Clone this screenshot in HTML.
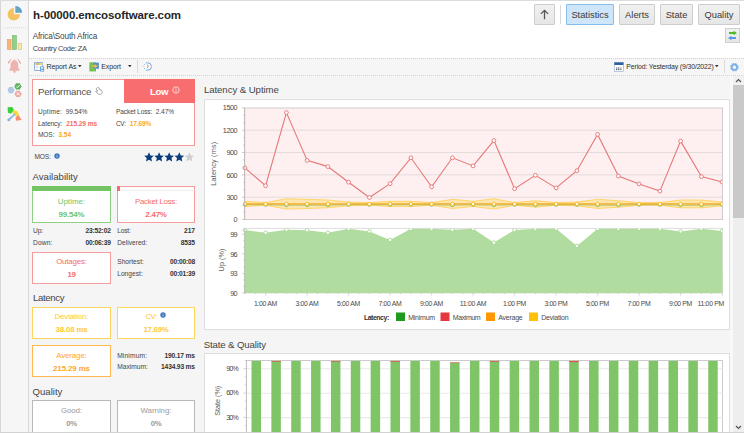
<!DOCTYPE html>
<html lang="en"><head><meta charset="utf-8"><title>h-00000.emcosoftware.com - Statistics</title>
<style>

*{box-sizing:border-box;margin:0;padding:0}
html,body{width:744px;height:433px;overflow:hidden}
body{position:relative;background:#f5f5f5;font-family:"Liberation Sans",sans-serif;font-size:8px;color:#444}
.a{position:absolute}
.t{position:absolute;white-space:pre;line-height:1}
.side{left:0;top:0;width:29px;height:433px;background:#f6f6f6;border-left:1px solid #d6d6d6;border-right:1px solid #d8d8d8}
.head{left:29px;top:0;width:715px;height:58px;background:#fff}
.topline{left:0;top:0;width:744px;height:1px;background:#dcdcdc}
.tool{left:29px;top:58px;width:715px;height:18px;background:#f6f6f6;border-top:1px dotted #d2d2d2;border-bottom:1px dotted #d2d2d2}
.btn{top:4px;height:21px;border:1px solid #cdcdcd;background:linear-gradient(#f1f1f1,#e6e6e6);border-radius:1px}
.btn.on{background:#cfe5f9;border-color:#84bdee}
.tile{background:#fff;border:1px solid #999}
.panel{background:#fff;border:1px solid #dedede}
svg{position:absolute;overflow:visible}
svg text{font-family:"Liberation Sans",sans-serif}

</style></head>
<body>
<div class="a side"></div><div class="a head"></div><div class="a tool"></div><div class="a topline"></div><div class="a btn" style="left:534px;width:21px"></div><svg class="a" style="left:534px;top:4px" width="21" height="21" viewBox="0 0 21 21"><path d="M10.5 6.3v8.9M6.9 9.9l3.6-3.6 3.6 3.6" fill="none" stroke="#555" stroke-width="1.3"/></svg><div class="a" style="left:560px;top:5px;width:1px;height:19px;background:#d8d8d8"></div><div class="a btn on" style="left:566px;width:48px"></div><div class="a btn" style="left:619px;width:36px"></div><div class="a btn" style="left:660px;width:33px"></div><div class="a btn" style="left:698px;width:42px"></div><div class="a" style="left:725px;top:28px;width:15px;height:15px;border:1px solid #d0d0d0;background:linear-gradient(#f1f1f1,#e6e6e6)"></div><svg class="a" style="left:725px;top:28px" width="15" height="15" viewBox="0 0 15 15"><path d="M4 4h4.6V2.7L12 5 8.600 7.300V6H4z" fill="#4cbb2a"/><path d="M11 9H6.400V7.800L3 10l3.400 2.200V11H11z" fill="#5a9be0"/></svg><svg class="a" style="left:78.0px;top:65.2px" width="3.6" height="2.4" viewBox="0 0 3.6 2.4"><path d="M0 0h3.6L1.8 2.2z" fill="#333"/></svg><svg class="a" style="left:128.39999999999998px;top:65.2px" width="3.6" height="2.4" viewBox="0 0 3.6 2.4"><path d="M0 0h3.6L1.8 2.2z" fill="#333"/></svg><svg class="a" style="left:715.4000000000001px;top:65.2px" width="3.6" height="2.4" viewBox="0 0 3.6 2.4"><path d="M0 0h3.6L1.8 2.2z" fill="#333"/></svg><div class="a" style="left:137px;top:60px;width:1px;height:13px;background:#dadada"></div><div class="a" style="left:724px;top:60px;width:1px;height:13px;background:#dadada"></div><div class="a" style="left:32px;top:79px;width:163px;height:67px;background:#fff;border:1px solid #f59a9a"></div><div class="a" style="left:124px;top:79px;width:71px;height:24px;background:#f86d6d"></div><svg class="a" style="left:172px;top:86px" width="8" height="8" viewBox="0 0 8 8"><circle cx="4" cy="4" r="3.2" fill="none" stroke="#fff" stroke-width="0.7"/><path d="M4 3.6v2.2M4 2.2v0.6" stroke="#fff" stroke-width="0.8"/></svg><svg class="a" style="left:0;top:0" width="744" height="433" viewBox="0 0 744 433"><g transform="translate(97.8 87.5) scale(0.8) translate(-98.3 -87.2)"><path d="M98.3 87.2c.6-.3 1.100 0 1.400.6l.9 1.800c.5-.2 1 .1 1.200.5.500-.1.900.2 1.100.6l.8 1.700c.5 1.100.1 2.200-1 2.800l-1.100.5c-1 .4-1.900.2-2.700-.5l-2.700-2.300c-.5-.4-.4-1 .1-1.300.4-.2.900-.1 1.300.2l.5.400-1.400-2.900c-.3-.6-.1-1.200.5-1.500z" fill="#fff" stroke="#7c7c7c" stroke-width="0.85" stroke-linejoin="round"/><path d="M99.9 89.500l.6 1.200M101.200 90l.5 1.100" stroke="#999" stroke-width="0.6" fill="none"/></g></svg><svg class="a" style="left:54px;top:152.8px" width="6" height="6" viewBox="0 0 6 6"><circle cx="3" cy="3" r="2.7" fill="#3f78bf"/><path d="M3 2.7v1.6M3 1.6v.5" stroke="#fff" stroke-width="0.7"/></svg><svg class="a" style="left:143.5px;top:152px" width="52" height="10" viewBox="0 0 52 10"><path transform="translate(0.0,0)" d="M5 0.3l1.45 3.1 3.35.4-2.5 2.3.65 3.35L5 7.8 2.05 9.45 2.7 6.1.2 3.8l3.35-.4z" fill="#0a3d7a"/><path transform="translate(10.1,0)" d="M5 0.3l1.45 3.1 3.35.4-2.5 2.3.65 3.35L5 7.8 2.05 9.45 2.7 6.1.2 3.8l3.35-.4z" fill="#0a3d7a"/><path transform="translate(20.2,0)" d="M5 0.3l1.45 3.1 3.35.4-2.5 2.3.65 3.35L5 7.8 2.05 9.45 2.7 6.1.2 3.8l3.35-.4z" fill="#0a3d7a"/><path transform="translate(30.299999999999997,0)" d="M5 0.3l1.45 3.1 3.35.4-2.5 2.3.65 3.35L5 7.8 2.05 9.45 2.7 6.1.2 3.8l3.35-.4z" fill="#0a3d7a"/><path transform="translate(40.4,0)" d="M5 0.3l1.45 3.1 3.35.4-2.5 2.3.65 3.35L5 7.8 2.05 9.45 2.7 6.1.2 3.8l3.35-.4z" fill="#d0d0d0"/></svg><div class="a" style="left:32px;top:186px;width:79px;height:37px;background:#fff;border:1px solid #8fd083"></div><div class="a" style="left:32px;top:186px;width:79px;height:4.5px;background:#74c365"></div><div class="a" style="left:117px;top:186px;width:78px;height:37px;background:#fff;border:1px solid #f79c9c"></div><div class="a" style="left:117px;top:186px;width:78px;height:4.5px;border:1px solid #f79c9c;border-bottom:1px dotted #e2e2e2;background:#fbfbfb"></div><div class="a" style="left:117px;top:186px;width:3px;height:4.5px;background:#f56c6c"></div><div class="a" style="left:32px;top:252px;width:79px;height:32px;background:#fff;border:1px solid #f79c9c"></div><div class="a" style="left:32px;top:307px;width:79px;height:32px;background:#fff;border:1px solid #ffd55e"></div><div class="a" style="left:117px;top:307px;width:78px;height:32px;background:#fff;border:1px solid #ffd55e"></div><svg class="a" style="left:159.9px;top:311.6px" width="6" height="6" viewBox="0 0 6 6"><circle cx="3" cy="3" r="2.7" fill="#3f78bf"/><path d="M3 2.7v1.6M3 1.6v.5" stroke="#fff" stroke-width="0.7"/></svg><div class="a" style="left:32px;top:345px;width:79px;height:32px;background:#fff;border:1px solid #ffb854"></div><div class="a" style="left:32px;top:400px;width:79px;height:33px;background:#fff;border:1px solid #b8b8b8"></div><div class="a" style="left:117px;top:400px;width:78px;height:33px;background:#fff;border:1px solid #b8b8b8"></div><div class="a panel" style="left:204px;top:99px;width:526px;height:231px"></div><div class="a panel" style="left:204px;top:353px;width:526px;height:90px"></div><div class="a" style="left:730px;top:76px;width:3px;height:357px;background:#f8f8f8"></div><div class="a" style="left:733px;top:76px;width:11px;height:357px;background:#eeeeee"></div><div class="a" style="left:733px;top:85px;width:11px;height:133px;background:#c9c9c9"></div><div class="a" style="left:733px;top:76px;width:11px;height:9px;background:#f0f0f0"></div><svg class="a" style="left:733px;top:76px" width="11" height="9" viewBox="0 0 11 9"><path d="M3 6l2.5-2.5L8 6" fill="none" stroke="#555" stroke-width="1.2"/></svg><svg class="a" style="left:733px;top:422px" width="11" height="11" viewBox="0 0 11 11"><path d="M3 4l2.5 2.5L8 4" fill="none" stroke="#555" stroke-width="1.2"/></svg><div class="a" style="left:0;top:432px;width:744px;height:1px;background:#d2d2d2;z-index:5"></div><svg class="a" style="left:0;top:0" width="744" height="433" viewBox="0 0 744 433"><rect x="244.5" y="108" width="478.0" height="111.5" fill="#fef0f0"/>
<line x1="244.5" x2="722.5" y1="197.17" y2="197.17" stroke="#ddd5d5" stroke-width="0.8"/>
<line x1="244.5" x2="722.5" y1="174.84" y2="174.84" stroke="#ddd5d5" stroke-width="0.8"/>
<line x1="244.5" x2="722.5" y1="152.51" y2="152.51" stroke="#ddd5d5" stroke-width="0.8"/>
<line x1="244.5" x2="722.5" y1="130.18" y2="130.18" stroke="#ddd5d5" stroke-width="0.8"/>
<rect x="244.5" y="108" width="478.0" height="111.5" fill="none" stroke="#d2cccc" stroke-width="1"/>
<clipPath id="latclip"><rect x="241.9" y="108" width="480.3" height="111.5"/></clipPath><g clip-path="url(#latclip)">
<polygon points="244.9,201.3 265.6,202.6 286.4,198.7 307.1,199.3 327.9,200.0 348.6,202.0 369.4,202.6 390.1,201.3 410.9,201.3 431.6,202.6 452.4,199.3 473.1,201.3 493.9,198.7 514.6,202.6 535.4,200.7 556.1,202.6 576.9,202.0 597.6,199.3 618.4,200.7 639.1,202.6 659.9,202.6 680.6,200.0 701.4,200.0 722.1,202.0 722.1,205.8 701.4,207.8 680.6,207.8 659.9,205.2 639.1,205.2 618.4,207.2 597.6,208.5 576.9,205.8 556.1,205.2 535.4,207.2 514.6,205.2 493.9,209.1 473.1,206.5 452.4,208.5 431.6,205.2 410.9,206.5 390.1,206.5 369.4,205.2 348.6,205.8 327.9,207.8 307.1,208.5 286.4,209.1 265.6,205.2 244.9,206.5" fill="#ffd95a" fill-opacity="0.42" stroke="#ffcd3c" stroke-width="0.7"/>
<polyline points="244.9,204.7 265.6,204.7 286.4,205.1 307.1,205.1 327.9,205.1 348.6,204.7 369.4,204.7 390.1,204.7 410.9,204.7 431.6,204.7 452.4,205.1 473.1,204.7 493.9,205.1 514.6,204.7 535.4,205.1 556.1,204.7 576.9,204.7 597.6,205.1 618.4,205.1 639.1,204.7 659.9,204.7 680.6,205.1 701.4,205.1 722.1,204.7" fill="none" stroke="#7cb342" stroke-width="0.7"/>
<polyline points="244.9,203.9 265.6,203.9 286.4,203.9 307.1,203.9 327.9,203.9 348.6,203.9 369.4,203.9 390.1,203.9 410.9,203.9 431.6,203.9 452.4,203.9 473.1,203.9 493.9,203.9 514.6,203.9 535.4,203.9 556.1,203.9 576.9,203.9 597.6,203.9 618.4,203.9 639.1,203.9 659.9,203.9 680.6,203.9 701.4,203.9 722.1,203.9" fill="none" stroke="#f9a825" stroke-width="1.1"/>
<circle cx="244.9" cy="204.7" r="1.7" fill="#fff" stroke="#7cb342" stroke-width="0.8"/>
<circle cx="244.9" cy="203.9" r="1.7" fill="#fff" stroke="#ffb300" stroke-width="0.8"/>
<circle cx="265.6" cy="204.7" r="1.7" fill="#fff" stroke="#7cb342" stroke-width="0.8"/>
<circle cx="265.6" cy="203.9" r="1.7" fill="#fff" stroke="#ffb300" stroke-width="0.8"/>
<circle cx="286.4" cy="205.1" r="1.7" fill="#fff" stroke="#7cb342" stroke-width="0.8"/>
<circle cx="286.4" cy="203.9" r="1.7" fill="#fff" stroke="#ffb300" stroke-width="0.8"/>
<circle cx="307.1" cy="205.1" r="1.7" fill="#fff" stroke="#7cb342" stroke-width="0.8"/>
<circle cx="307.1" cy="203.9" r="1.7" fill="#fff" stroke="#ffb300" stroke-width="0.8"/>
<circle cx="327.9" cy="205.1" r="1.7" fill="#fff" stroke="#7cb342" stroke-width="0.8"/>
<circle cx="327.9" cy="203.9" r="1.7" fill="#fff" stroke="#ffb300" stroke-width="0.8"/>
<circle cx="348.6" cy="204.7" r="1.7" fill="#fff" stroke="#7cb342" stroke-width="0.8"/>
<circle cx="348.6" cy="203.9" r="1.7" fill="#fff" stroke="#ffb300" stroke-width="0.8"/>
<circle cx="369.4" cy="204.7" r="1.7" fill="#fff" stroke="#7cb342" stroke-width="0.8"/>
<circle cx="369.4" cy="203.9" r="1.7" fill="#fff" stroke="#ffb300" stroke-width="0.8"/>
<circle cx="390.1" cy="204.7" r="1.7" fill="#fff" stroke="#7cb342" stroke-width="0.8"/>
<circle cx="390.1" cy="203.9" r="1.7" fill="#fff" stroke="#ffb300" stroke-width="0.8"/>
<circle cx="410.9" cy="204.7" r="1.7" fill="#fff" stroke="#7cb342" stroke-width="0.8"/>
<circle cx="410.9" cy="203.9" r="1.7" fill="#fff" stroke="#ffb300" stroke-width="0.8"/>
<circle cx="431.6" cy="204.7" r="1.7" fill="#fff" stroke="#7cb342" stroke-width="0.8"/>
<circle cx="431.6" cy="203.9" r="1.7" fill="#fff" stroke="#ffb300" stroke-width="0.8"/>
<circle cx="452.4" cy="205.1" r="1.7" fill="#fff" stroke="#7cb342" stroke-width="0.8"/>
<circle cx="452.4" cy="203.9" r="1.7" fill="#fff" stroke="#ffb300" stroke-width="0.8"/>
<circle cx="473.1" cy="204.7" r="1.7" fill="#fff" stroke="#7cb342" stroke-width="0.8"/>
<circle cx="473.1" cy="203.9" r="1.7" fill="#fff" stroke="#ffb300" stroke-width="0.8"/>
<circle cx="493.9" cy="205.1" r="1.7" fill="#fff" stroke="#7cb342" stroke-width="0.8"/>
<circle cx="493.9" cy="203.9" r="1.7" fill="#fff" stroke="#ffb300" stroke-width="0.8"/>
<circle cx="514.6" cy="204.7" r="1.7" fill="#fff" stroke="#7cb342" stroke-width="0.8"/>
<circle cx="514.6" cy="203.9" r="1.7" fill="#fff" stroke="#ffb300" stroke-width="0.8"/>
<circle cx="535.4" cy="205.1" r="1.7" fill="#fff" stroke="#7cb342" stroke-width="0.8"/>
<circle cx="535.4" cy="203.9" r="1.7" fill="#fff" stroke="#ffb300" stroke-width="0.8"/>
<circle cx="556.1" cy="204.7" r="1.7" fill="#fff" stroke="#7cb342" stroke-width="0.8"/>
<circle cx="556.1" cy="203.9" r="1.7" fill="#fff" stroke="#ffb300" stroke-width="0.8"/>
<circle cx="576.9" cy="204.7" r="1.7" fill="#fff" stroke="#7cb342" stroke-width="0.8"/>
<circle cx="576.9" cy="203.9" r="1.7" fill="#fff" stroke="#ffb300" stroke-width="0.8"/>
<circle cx="597.6" cy="205.1" r="1.7" fill="#fff" stroke="#7cb342" stroke-width="0.8"/>
<circle cx="597.6" cy="203.9" r="1.7" fill="#fff" stroke="#ffb300" stroke-width="0.8"/>
<circle cx="618.4" cy="205.1" r="1.7" fill="#fff" stroke="#7cb342" stroke-width="0.8"/>
<circle cx="618.4" cy="203.9" r="1.7" fill="#fff" stroke="#ffb300" stroke-width="0.8"/>
<circle cx="639.1" cy="204.7" r="1.7" fill="#fff" stroke="#7cb342" stroke-width="0.8"/>
<circle cx="639.1" cy="203.9" r="1.7" fill="#fff" stroke="#ffb300" stroke-width="0.8"/>
<circle cx="659.9" cy="204.7" r="1.7" fill="#fff" stroke="#7cb342" stroke-width="0.8"/>
<circle cx="659.9" cy="203.9" r="1.7" fill="#fff" stroke="#ffb300" stroke-width="0.8"/>
<circle cx="680.6" cy="205.1" r="1.7" fill="#fff" stroke="#7cb342" stroke-width="0.8"/>
<circle cx="680.6" cy="203.9" r="1.7" fill="#fff" stroke="#ffb300" stroke-width="0.8"/>
<circle cx="701.4" cy="205.1" r="1.7" fill="#fff" stroke="#7cb342" stroke-width="0.8"/>
<circle cx="701.4" cy="203.9" r="1.7" fill="#fff" stroke="#ffb300" stroke-width="0.8"/>
<circle cx="722.1" cy="204.7" r="1.7" fill="#fff" stroke="#7cb342" stroke-width="0.8"/>
<circle cx="722.1" cy="203.9" r="1.7" fill="#fff" stroke="#ffb300" stroke-width="0.8"/>
<polyline points="244.9,167.9 265.6,185.7 286.4,112.6 307.1,160.4 327.9,166.6 348.6,182.2 369.4,197.5 390.1,183.7 410.9,157.8 431.6,186.8 452.4,157.8 473.1,165.9 493.9,140.6 514.6,188.7 535.4,175.3 556.1,187.9 576.9,170.7 597.6,134.4 618.4,176.1 639.1,183.9 659.9,191.1 680.6,141.1 701.4,176.6 722.1,182.0" fill="none" stroke="#e67878" stroke-width="1.1"/>
<circle cx="244.9" cy="167.9" r="1.9" fill="#fff" stroke="#e67878" stroke-width="0.95"/>
<circle cx="265.6" cy="185.7" r="1.9" fill="#fff" stroke="#e67878" stroke-width="0.95"/>
<circle cx="286.4" cy="112.6" r="1.9" fill="#fff" stroke="#e67878" stroke-width="0.95"/>
<circle cx="307.1" cy="160.4" r="1.9" fill="#fff" stroke="#e67878" stroke-width="0.95"/>
<circle cx="327.9" cy="166.6" r="1.9" fill="#fff" stroke="#e67878" stroke-width="0.95"/>
<circle cx="348.6" cy="182.2" r="1.9" fill="#fff" stroke="#e67878" stroke-width="0.95"/>
<circle cx="369.4" cy="197.5" r="1.9" fill="#fff" stroke="#e67878" stroke-width="0.95"/>
<circle cx="390.1" cy="183.7" r="1.9" fill="#fff" stroke="#e67878" stroke-width="0.95"/>
<circle cx="410.9" cy="157.8" r="1.9" fill="#fff" stroke="#e67878" stroke-width="0.95"/>
<circle cx="431.6" cy="186.8" r="1.9" fill="#fff" stroke="#e67878" stroke-width="0.95"/>
<circle cx="452.4" cy="157.8" r="1.9" fill="#fff" stroke="#e67878" stroke-width="0.95"/>
<circle cx="473.1" cy="165.9" r="1.9" fill="#fff" stroke="#e67878" stroke-width="0.95"/>
<circle cx="493.9" cy="140.6" r="1.9" fill="#fff" stroke="#e67878" stroke-width="0.95"/>
<circle cx="514.6" cy="188.7" r="1.9" fill="#fff" stroke="#e67878" stroke-width="0.95"/>
<circle cx="535.4" cy="175.3" r="1.9" fill="#fff" stroke="#e67878" stroke-width="0.95"/>
<circle cx="556.1" cy="187.9" r="1.9" fill="#fff" stroke="#e67878" stroke-width="0.95"/>
<circle cx="576.9" cy="170.7" r="1.9" fill="#fff" stroke="#e67878" stroke-width="0.95"/>
<circle cx="597.6" cy="134.4" r="1.9" fill="#fff" stroke="#e67878" stroke-width="0.95"/>
<circle cx="618.4" cy="176.1" r="1.9" fill="#fff" stroke="#e67878" stroke-width="0.95"/>
<circle cx="639.1" cy="183.9" r="1.9" fill="#fff" stroke="#e67878" stroke-width="0.95"/>
<circle cx="659.9" cy="191.1" r="1.9" fill="#fff" stroke="#e67878" stroke-width="0.95"/>
<circle cx="680.6" cy="141.1" r="1.9" fill="#fff" stroke="#e67878" stroke-width="0.95"/>
<circle cx="701.4" cy="176.6" r="1.9" fill="#fff" stroke="#e67878" stroke-width="0.95"/>
<circle cx="722.1" cy="182.0" r="1.9" fill="#fff" stroke="#e67878" stroke-width="0.95"/>
</g>
<rect x="244.5" y="228.3" width="478.0" height="64.69999999999999" fill="#fff" stroke="#d4d4d4" stroke-width="0.8"/>
<polygon points="244.5,293 244.9,230.0 265.6,232.7 286.4,229.8 307.1,230.2 327.9,232.7 348.6,228.8 369.4,231.4 390.1,240.0 410.9,228.8 431.6,228.8 452.4,229.8 473.1,228.8 493.9,242.6 514.6,230.0 535.4,228.8 556.1,228.8 576.9,246.0 597.6,228.8 618.4,228.8 639.1,228.8 659.9,228.8 680.6,231.4 701.4,228.8 722.1,231.1 722.5,293" fill="#b0dc9f"/>
<clipPath id="upclip"><rect x="241.9" y="228.60000000000002" width="480.3" height="64.69999999999999"/></clipPath><g clip-path="url(#upclip)">
<circle cx="244.9" cy="230.0" r="1.8" fill="#fff" stroke="#a5d694" stroke-width="0.9"/>
<circle cx="265.6" cy="232.7" r="1.8" fill="#fff" stroke="#a5d694" stroke-width="0.9"/>
<circle cx="286.4" cy="229.8" r="1.8" fill="#fff" stroke="#a5d694" stroke-width="0.9"/>
<circle cx="307.1" cy="230.2" r="1.8" fill="#fff" stroke="#a5d694" stroke-width="0.9"/>
<circle cx="327.9" cy="232.7" r="1.8" fill="#fff" stroke="#a5d694" stroke-width="0.9"/>
<circle cx="348.6" cy="228.8" r="1.8" fill="#fff" stroke="#a5d694" stroke-width="0.9"/>
<circle cx="369.4" cy="231.4" r="1.8" fill="#fff" stroke="#a5d694" stroke-width="0.9"/>
<circle cx="390.1" cy="240.0" r="1.8" fill="#fff" stroke="#a5d694" stroke-width="0.9"/>
<circle cx="410.9" cy="228.8" r="1.8" fill="#fff" stroke="#a5d694" stroke-width="0.9"/>
<circle cx="431.6" cy="228.8" r="1.8" fill="#fff" stroke="#a5d694" stroke-width="0.9"/>
<circle cx="452.4" cy="229.8" r="1.8" fill="#fff" stroke="#a5d694" stroke-width="0.9"/>
<circle cx="473.1" cy="228.8" r="1.8" fill="#fff" stroke="#a5d694" stroke-width="0.9"/>
<circle cx="493.9" cy="242.6" r="1.8" fill="#fff" stroke="#a5d694" stroke-width="0.9"/>
<circle cx="514.6" cy="230.0" r="1.8" fill="#fff" stroke="#a5d694" stroke-width="0.9"/>
<circle cx="535.4" cy="228.8" r="1.8" fill="#fff" stroke="#a5d694" stroke-width="0.9"/>
<circle cx="556.1" cy="228.8" r="1.8" fill="#fff" stroke="#a5d694" stroke-width="0.9"/>
<circle cx="576.9" cy="246.0" r="1.8" fill="#fff" stroke="#a5d694" stroke-width="0.9"/>
<circle cx="597.6" cy="228.8" r="1.8" fill="#fff" stroke="#a5d694" stroke-width="0.9"/>
<circle cx="618.4" cy="228.8" r="1.8" fill="#fff" stroke="#a5d694" stroke-width="0.9"/>
<circle cx="639.1" cy="228.8" r="1.8" fill="#fff" stroke="#a5d694" stroke-width="0.9"/>
<circle cx="659.9" cy="228.8" r="1.8" fill="#fff" stroke="#a5d694" stroke-width="0.9"/>
<circle cx="680.6" cy="231.4" r="1.8" fill="#fff" stroke="#a5d694" stroke-width="0.9"/>
<circle cx="701.4" cy="228.8" r="1.8" fill="#fff" stroke="#a5d694" stroke-width="0.9"/>
<circle cx="722.1" cy="231.1" r="1.8" fill="#fff" stroke="#a5d694" stroke-width="0.9"/>
</g>
<line x1="242.0" x2="244.5" y1="219.50" y2="219.50" stroke="#b4b4b4" stroke-width="0.7"/>
<line x1="243.1" x2="244.5" y1="212.06" y2="212.06" stroke="#b4b4b4" stroke-width="0.7"/>
<line x1="243.1" x2="244.5" y1="204.61" y2="204.61" stroke="#b4b4b4" stroke-width="0.7"/>
<line x1="242.0" x2="244.5" y1="197.17" y2="197.17" stroke="#b4b4b4" stroke-width="0.7"/>
<line x1="243.1" x2="244.5" y1="189.73" y2="189.73" stroke="#b4b4b4" stroke-width="0.7"/>
<line x1="243.1" x2="244.5" y1="182.28" y2="182.28" stroke="#b4b4b4" stroke-width="0.7"/>
<line x1="242.0" x2="244.5" y1="174.84" y2="174.84" stroke="#b4b4b4" stroke-width="0.7"/>
<line x1="243.1" x2="244.5" y1="167.40" y2="167.40" stroke="#b4b4b4" stroke-width="0.7"/>
<line x1="243.1" x2="244.5" y1="159.95" y2="159.95" stroke="#b4b4b4" stroke-width="0.7"/>
<line x1="242.0" x2="244.5" y1="152.51" y2="152.51" stroke="#b4b4b4" stroke-width="0.7"/>
<line x1="243.1" x2="244.5" y1="145.07" y2="145.07" stroke="#b4b4b4" stroke-width="0.7"/>
<line x1="243.1" x2="244.5" y1="137.62" y2="137.62" stroke="#b4b4b4" stroke-width="0.7"/>
<line x1="242.0" x2="244.5" y1="130.18" y2="130.18" stroke="#b4b4b4" stroke-width="0.7"/>
<line x1="243.1" x2="244.5" y1="122.74" y2="122.74" stroke="#b4b4b4" stroke-width="0.7"/>
<line x1="243.1" x2="244.5" y1="115.29" y2="115.29" stroke="#b4b4b4" stroke-width="0.7"/>
<line x1="242.0" x2="244.5" y1="107.85" y2="107.85" stroke="#b4b4b4" stroke-width="0.7"/>
<line x1="244.7" x2="244.7" y1="108" y2="219.5" stroke="#b8b4b4" stroke-width="0.8"/>
<line x1="244.7" x2="244.7" y1="228.3" y2="293" stroke="#b8b8b8" stroke-width="0.8"/>
<line x1="242.0" x2="244.5" y1="293.00" y2="293.00" stroke="#b8b8b8" stroke-width="0.6"/>
<line x1="243.2" x2="244.5" y1="286.47" y2="286.47" stroke="#b8b8b8" stroke-width="0.6"/>
<line x1="243.2" x2="244.5" y1="279.93" y2="279.93" stroke="#b8b8b8" stroke-width="0.6"/>
<line x1="242.0" x2="244.5" y1="273.40" y2="273.40" stroke="#b8b8b8" stroke-width="0.6"/>
<line x1="243.2" x2="244.5" y1="266.87" y2="266.87" stroke="#b8b8b8" stroke-width="0.6"/>
<line x1="243.2" x2="244.5" y1="260.33" y2="260.33" stroke="#b8b8b8" stroke-width="0.6"/>
<line x1="242.0" x2="244.5" y1="253.80" y2="253.80" stroke="#b8b8b8" stroke-width="0.6"/>
<line x1="243.2" x2="244.5" y1="247.27" y2="247.27" stroke="#b8b8b8" stroke-width="0.6"/>
<line x1="243.2" x2="244.5" y1="240.73" y2="240.73" stroke="#b8b8b8" stroke-width="0.6"/>
<line x1="242.0" x2="244.5" y1="234.20" y2="234.20" stroke="#b8b8b8" stroke-width="0.6"/>
<line x1="244.90" x2="244.90" y1="293" y2="294.3" stroke="#b8b8b8" stroke-width="0.6"/>
<line x1="255.28" x2="255.28" y1="293" y2="294.3" stroke="#b8b8b8" stroke-width="0.6"/>
<line x1="265.65" x2="265.65" y1="293" y2="295.5" stroke="#b8b8b8" stroke-width="0.6"/>
<line x1="276.02" x2="276.02" y1="293" y2="294.3" stroke="#b8b8b8" stroke-width="0.6"/>
<line x1="286.40" x2="286.40" y1="293" y2="294.3" stroke="#b8b8b8" stroke-width="0.6"/>
<line x1="296.77" x2="296.77" y1="293" y2="294.3" stroke="#b8b8b8" stroke-width="0.6"/>
<line x1="307.15" x2="307.15" y1="293" y2="295.5" stroke="#b8b8b8" stroke-width="0.6"/>
<line x1="317.52" x2="317.52" y1="293" y2="294.3" stroke="#b8b8b8" stroke-width="0.6"/>
<line x1="327.90" x2="327.90" y1="293" y2="294.3" stroke="#b8b8b8" stroke-width="0.6"/>
<line x1="338.27" x2="338.27" y1="293" y2="294.3" stroke="#b8b8b8" stroke-width="0.6"/>
<line x1="348.65" x2="348.65" y1="293" y2="295.5" stroke="#b8b8b8" stroke-width="0.6"/>
<line x1="359.02" x2="359.02" y1="293" y2="294.3" stroke="#b8b8b8" stroke-width="0.6"/>
<line x1="369.40" x2="369.40" y1="293" y2="294.3" stroke="#b8b8b8" stroke-width="0.6"/>
<line x1="379.77" x2="379.77" y1="293" y2="294.3" stroke="#b8b8b8" stroke-width="0.6"/>
<line x1="390.15" x2="390.15" y1="293" y2="295.5" stroke="#b8b8b8" stroke-width="0.6"/>
<line x1="400.52" x2="400.52" y1="293" y2="294.3" stroke="#b8b8b8" stroke-width="0.6"/>
<line x1="410.90" x2="410.90" y1="293" y2="294.3" stroke="#b8b8b8" stroke-width="0.6"/>
<line x1="421.27" x2="421.27" y1="293" y2="294.3" stroke="#b8b8b8" stroke-width="0.6"/>
<line x1="431.65" x2="431.65" y1="293" y2="295.5" stroke="#b8b8b8" stroke-width="0.6"/>
<line x1="442.02" x2="442.02" y1="293" y2="294.3" stroke="#b8b8b8" stroke-width="0.6"/>
<line x1="452.40" x2="452.40" y1="293" y2="294.3" stroke="#b8b8b8" stroke-width="0.6"/>
<line x1="462.77" x2="462.77" y1="293" y2="294.3" stroke="#b8b8b8" stroke-width="0.6"/>
<line x1="473.15" x2="473.15" y1="293" y2="295.5" stroke="#b8b8b8" stroke-width="0.6"/>
<line x1="483.52" x2="483.52" y1="293" y2="294.3" stroke="#b8b8b8" stroke-width="0.6"/>
<line x1="493.90" x2="493.90" y1="293" y2="294.3" stroke="#b8b8b8" stroke-width="0.6"/>
<line x1="504.27" x2="504.27" y1="293" y2="294.3" stroke="#b8b8b8" stroke-width="0.6"/>
<line x1="514.65" x2="514.65" y1="293" y2="295.5" stroke="#b8b8b8" stroke-width="0.6"/>
<line x1="525.02" x2="525.02" y1="293" y2="294.3" stroke="#b8b8b8" stroke-width="0.6"/>
<line x1="535.40" x2="535.40" y1="293" y2="294.3" stroke="#b8b8b8" stroke-width="0.6"/>
<line x1="545.77" x2="545.77" y1="293" y2="294.3" stroke="#b8b8b8" stroke-width="0.6"/>
<line x1="556.15" x2="556.15" y1="293" y2="295.5" stroke="#b8b8b8" stroke-width="0.6"/>
<line x1="566.52" x2="566.52" y1="293" y2="294.3" stroke="#b8b8b8" stroke-width="0.6"/>
<line x1="576.90" x2="576.90" y1="293" y2="294.3" stroke="#b8b8b8" stroke-width="0.6"/>
<line x1="587.27" x2="587.27" y1="293" y2="294.3" stroke="#b8b8b8" stroke-width="0.6"/>
<line x1="597.65" x2="597.65" y1="293" y2="295.5" stroke="#b8b8b8" stroke-width="0.6"/>
<line x1="608.02" x2="608.02" y1="293" y2="294.3" stroke="#b8b8b8" stroke-width="0.6"/>
<line x1="618.40" x2="618.40" y1="293" y2="294.3" stroke="#b8b8b8" stroke-width="0.6"/>
<line x1="628.77" x2="628.77" y1="293" y2="294.3" stroke="#b8b8b8" stroke-width="0.6"/>
<line x1="639.15" x2="639.15" y1="293" y2="295.5" stroke="#b8b8b8" stroke-width="0.6"/>
<line x1="649.52" x2="649.52" y1="293" y2="294.3" stroke="#b8b8b8" stroke-width="0.6"/>
<line x1="659.90" x2="659.90" y1="293" y2="294.3" stroke="#b8b8b8" stroke-width="0.6"/>
<line x1="670.27" x2="670.27" y1="293" y2="294.3" stroke="#b8b8b8" stroke-width="0.6"/>
<line x1="680.65" x2="680.65" y1="293" y2="295.5" stroke="#b8b8b8" stroke-width="0.6"/>
<line x1="691.02" x2="691.02" y1="293" y2="294.3" stroke="#b8b8b8" stroke-width="0.6"/>
<line x1="701.40" x2="701.40" y1="293" y2="294.3" stroke="#b8b8b8" stroke-width="0.6"/>
<line x1="711.77" x2="711.77" y1="293" y2="294.3" stroke="#b8b8b8" stroke-width="0.6"/>
<line x1="722.15" x2="722.15" y1="293" y2="295.5" stroke="#b8b8b8" stroke-width="0.6"/>
<text x="237.6" y="222" font-size="7.3" fill="#4a4a4a" text-anchor="end">0</text>
<text x="237.6" y="200" font-size="7.3" fill="#4a4a4a" text-anchor="end" textLength="11.100000000000001" lengthAdjust="spacing">300</text>
<text x="237.6" y="178" font-size="7.3" fill="#4a4a4a" text-anchor="end" textLength="11.100000000000001" lengthAdjust="spacing">600</text>
<text x="237.6" y="155" font-size="7.3" fill="#4a4a4a" text-anchor="end" textLength="11.100000000000001" lengthAdjust="spacing">900</text>
<text x="237.6" y="133" font-size="7.3" fill="#4a4a4a" text-anchor="end" textLength="14.8" lengthAdjust="spacing">1200</text>
<text x="237.6" y="110" font-size="7.3" fill="#4a4a4a" text-anchor="end" textLength="14.8" lengthAdjust="spacing">1500</text>
<text x="237.6" y="296" font-size="7.3" fill="#4a4a4a" text-anchor="end" textLength="7.4" lengthAdjust="spacing">90</text>
<text x="237.6" y="276" font-size="7.3" fill="#4a4a4a" text-anchor="end" textLength="7.4" lengthAdjust="spacing">93</text>
<text x="237.6" y="257" font-size="7.3" fill="#4a4a4a" text-anchor="end" textLength="7.4" lengthAdjust="spacing">96</text>
<text x="237.6" y="237" font-size="7.3" fill="#4a4a4a" text-anchor="end" textLength="7.4" lengthAdjust="spacing">99</text>
<text x="216.2" y="163.8" font-size="7.2" fill="#5a5a5a" text-anchor="middle" transform="rotate(-90 216.2 163.8)" textLength="43.8" lengthAdjust="spacing">Latency (ms)</text>
<text x="223.7" y="260" font-size="7.2" fill="#5a5a5a" text-anchor="middle" transform="rotate(-90 223.7 260)" textLength="22.8" lengthAdjust="spacing">Up (%)</text>
<text x="265.6" y="306" font-size="6.9" fill="#4a4a4a" text-anchor="middle" textLength="23.2" lengthAdjust="spacing">1:00 AM</text>
<text x="307.1" y="306" font-size="6.9" fill="#4a4a4a" text-anchor="middle" textLength="23.2" lengthAdjust="spacing">3:00 AM</text>
<text x="348.6" y="306" font-size="6.9" fill="#4a4a4a" text-anchor="middle" textLength="23.2" lengthAdjust="spacing">5:00 AM</text>
<text x="390.1" y="306" font-size="6.9" fill="#4a4a4a" text-anchor="middle" textLength="23.2" lengthAdjust="spacing">7:00 AM</text>
<text x="431.6" y="306" font-size="6.9" fill="#4a4a4a" text-anchor="middle" textLength="23.2" lengthAdjust="spacing">9:00 AM</text>
<text x="473.1" y="306" font-size="6.9" fill="#4a4a4a" text-anchor="middle" textLength="26.8" lengthAdjust="spacing">11:00 AM</text>
<text x="514.6" y="306" font-size="6.9" fill="#4a4a4a" text-anchor="middle" textLength="23.2" lengthAdjust="spacing">1:00 PM</text>
<text x="556.1" y="306" font-size="6.9" fill="#4a4a4a" text-anchor="middle" textLength="23.2" lengthAdjust="spacing">3:00 PM</text>
<text x="597.6" y="306" font-size="6.9" fill="#4a4a4a" text-anchor="middle" textLength="23.2" lengthAdjust="spacing">5:00 PM</text>
<text x="639.1" y="306" font-size="6.9" fill="#4a4a4a" text-anchor="middle" textLength="23.2" lengthAdjust="spacing">7:00 PM</text>
<text x="680.6" y="306" font-size="6.9" fill="#4a4a4a" text-anchor="middle" textLength="23.2" lengthAdjust="spacing">9:00 PM</text>
<text x="724.3" y="306" font-size="6.9" fill="#4a4a4a" text-anchor="end" textLength="26.8" lengthAdjust="spacing">11:00 PM</text>
<text x="389.2" y="320" font-size="6.9" fill="#333" text-anchor="end" font-weight="700" textLength="25.3" lengthAdjust="spacing">Latency:</text>
<rect x="396" y="312.5" width="9" height="8.5" fill="#1e9a1e"/>
<text x="408.2" y="319.8" font-size="7" fill="#4a4a4a" textLength="27" lengthAdjust="spacing">Minimum</text>
<rect x="440.5" y="312.5" width="9" height="8.5" fill="#e5393f"/>
<text x="452.7" y="319.8" font-size="7" fill="#4a4a4a" textLength="28" lengthAdjust="spacing">Maximum</text>
<rect x="486" y="312.5" width="9" height="8.5" fill="#ff9800"/>
<text x="498.2" y="319.8" font-size="7" fill="#4a4a4a" textLength="24.5" lengthAdjust="spacing">Average</text>
<rect x="529" y="312.5" width="9" height="8.5" fill="#ffc107"/>
<text x="541.2" y="319.8" font-size="7" fill="#4a4a4a" textLength="27.5" lengthAdjust="spacing">Deviation</text>
<rect x="246.5" y="360.5" width="476.0" height="80" fill="#fff" stroke="#c6c6c6" stroke-width="0.9"/>
<line x1="247" x2="722.5" y1="368.8" y2="368.8" stroke="#e9e9e9" stroke-width="1.1"/>
<text x="238.8" y="371" font-size="7.3" fill="#4a4a4a" text-anchor="end" textLength="12.6" lengthAdjust="spacing">90%</text>
<line x1="247" x2="722.5" y1="393.2" y2="393.2" stroke="#e9e9e9" stroke-width="1.1"/>
<text x="238.8" y="395" font-size="7.3" fill="#4a4a4a" text-anchor="end" textLength="12.6" lengthAdjust="spacing">60%</text>
<line x1="247" x2="722.5" y1="417.6" y2="417.6" stroke="#e9e9e9" stroke-width="1.1"/>
<text x="238.8" y="420" font-size="7.3" fill="#4a4a4a" text-anchor="end" textLength="12.6" lengthAdjust="spacing">30%</text>
<line x1="244.7" x2="246" y1="360.50" y2="360.50" stroke="#b8b8b8" stroke-width="0.6"/>
<line x1="243.5" x2="246" y1="368.63" y2="368.63" stroke="#b8b8b8" stroke-width="0.6"/>
<line x1="244.7" x2="246" y1="376.76" y2="376.76" stroke="#b8b8b8" stroke-width="0.6"/>
<line x1="244.7" x2="246" y1="384.89" y2="384.89" stroke="#b8b8b8" stroke-width="0.6"/>
<line x1="243.5" x2="246" y1="393.02" y2="393.02" stroke="#b8b8b8" stroke-width="0.6"/>
<line x1="244.7" x2="246" y1="401.15" y2="401.15" stroke="#b8b8b8" stroke-width="0.6"/>
<line x1="244.7" x2="246" y1="409.28" y2="409.28" stroke="#b8b8b8" stroke-width="0.6"/>
<line x1="243.5" x2="246" y1="417.41" y2="417.41" stroke="#b8b8b8" stroke-width="0.6"/>
<line x1="244.7" x2="246" y1="425.54" y2="425.54" stroke="#b8b8b8" stroke-width="0.6"/>
<line x1="244.7" x2="246" y1="433.67" y2="433.67" stroke="#b8b8b8" stroke-width="0.6"/>
<line x1="243.5" x2="246" y1="441.80" y2="441.80" stroke="#b8b8b8" stroke-width="0.6"/>
<line x1="244.7" x2="246" y1="449.93" y2="449.93" stroke="#b8b8b8" stroke-width="0.6"/>
<line x1="246.4" x2="246.4" y1="360.1" y2="433" stroke="#bcbcbc" stroke-width="0.8"/>
<text x="219.9" y="400.8" font-size="7.2" fill="#5a5a5a" text-anchor="middle" transform="rotate(-90 219.9 400.8)" textLength="30" lengthAdjust="spacing">State (%)</text>
<rect x="251.50" y="360.90" width="9.5" height="80" fill="#7fc567"/>
<rect x="271.36" y="360.90" width="9.5" height="80" fill="#7fc567"/>
<rect x="271.36" y="360.90" width="9.5" height="0.75" fill="#e2554f"/>
<rect x="291.21" y="360.90" width="9.5" height="80" fill="#7fc567"/>
<rect x="311.07" y="360.90" width="9.5" height="80" fill="#7fc567"/>
<rect x="330.93" y="360.90" width="9.5" height="80" fill="#7fc567"/>
<rect x="330.93" y="360.90" width="9.5" height="0.75" fill="#e2554f"/>
<rect x="350.78" y="360.90" width="9.5" height="80" fill="#7fc567"/>
<rect x="370.64" y="360.90" width="9.5" height="80" fill="#7fc567"/>
<rect x="390.50" y="360.90" width="9.5" height="80" fill="#7fc567"/>
<rect x="390.50" y="360.90" width="9.5" height="0.85" fill="#e2554f"/>
<rect x="410.36" y="360.90" width="9.5" height="80" fill="#7fc567"/>
<rect x="430.21" y="360.90" width="9.5" height="80" fill="#7fc567"/>
<rect x="450.07" y="362.50" width="9.5" height="80" fill="#7fc567"/>
<rect x="450.07" y="362.50" width="9.5" height="0.6" fill="#e2554f"/>
<rect x="469.93" y="360.90" width="9.5" height="80" fill="#7fc567"/>
<rect x="489.78" y="360.90" width="9.5" height="80" fill="#7fc567"/>
<rect x="489.78" y="360.90" width="9.5" height="0.85" fill="#e2554f"/>
<rect x="509.64" y="360.90" width="9.5" height="80" fill="#7fc567"/>
<rect x="529.50" y="360.90" width="9.5" height="80" fill="#7fc567"/>
<rect x="549.36" y="360.90" width="9.5" height="80" fill="#7fc567"/>
<rect x="569.21" y="360.90" width="9.5" height="80" fill="#7fc567"/>
<rect x="569.21" y="360.90" width="9.5" height="1.3" fill="#e2554f"/>
<rect x="589.07" y="360.90" width="9.5" height="80" fill="#7fc567"/>
<rect x="608.93" y="360.90" width="9.5" height="80" fill="#7fc567"/>
<rect x="628.78" y="360.90" width="9.5" height="80" fill="#7fc567"/>
<rect x="648.64" y="360.90" width="9.5" height="80" fill="#7fc567"/>
<rect x="668.50" y="360.90" width="9.5" height="80" fill="#7fc567"/>
<rect x="688.35" y="360.90" width="9.5" height="80" fill="#7fc567"/>
<rect x="708.21" y="360.90" width="9.5" height="80" fill="#7fc567"/></svg><svg class="a" style="left:0;top:0" width="744" height="433" viewBox="0 0 744 433"><path d="M13.8 8.1A6.2 6.2 0 1 0 20 14.3H13.8z" fill="#f5c262"/>
<path d="M15.4 6A6.8 6.8 0 0 1 22.2 12.800H15.400z" fill="#5b9bd5"/>
<path d="M16.4 8.3h1.1M18.2 9.7h1.1M16.5 10.3h1M18.4 11.6h1.100M16.500 12h1" stroke="#7ed08a" stroke-width="0.9"/>
<line x1="3" x2="26" y1="27.8" y2="27.8" stroke="#d2d2d2" stroke-width="0.8" stroke-dasharray="1 1"/>
<rect x="7.5" y="39.5" width="3.6" height="10" fill="#f9b572" stroke="#f0965c" stroke-width="0.6"/>
<rect x="12.4" y="35.5" width="3.9" height="14" fill="#93cf8a" stroke="#70b868" stroke-width="0.6"/>
<rect x="18.1" y="43.5" width="3.6" height="6" fill="#fde9a4" stroke="#d2c08c" stroke-width="0.6"/>
<path d="M14.4 59.6c.6 0 1 .4 1 1 2 .7 2.8 2.4 2.8 4.6v2.4l1.4 2.2v.9H9.2v-.9l1.4-2.2v-2.4c0-2.2.8-3.9 2.8-4.6 0-.6.4-1 1-1z" fill="#efb3ae"/>
<circle cx="14.4" cy="71.6" r="1.3" fill="#efb3ae"/>
<path d="M11.3 59.3a7 7 0 0 0-3 4.2M17.5 59.3a7 7 0 0 1 3 4.2" fill="none" stroke="#e28880" stroke-width="1"/>
<polygon points="14.50,90.10 12.75,93.13 9.25,93.13 7.50,90.10 9.25,87.07 12.75,87.07" fill="#a9c6e4"/>
<polygon points="21.60,86.40 19.75,89.60 16.05,89.60 14.20,86.40 16.05,83.20 19.75,83.20" fill="#5fb35f"/>
<polygon points="21.80,93.90 19.95,97.10 16.25,97.10 14.40,93.90 16.25,90.70 19.95,90.70" fill="#efaaa6"/>
<path d="M16.2 86.4l1.2 1.3 2.3-2.6" fill="none" stroke="#fff" stroke-width="0.9"/>
<path d="M16.8 92.6l2.6 2.6M19.4 92.6l-2.6 2.6" fill="none" stroke="#fff" stroke-width="0.9"/>
<circle cx="11" cy="90.1" r="1.6" fill="none" stroke="#c4d8ee" stroke-width="0.6"/>
<path d="M7.6 107.2l4.600-.3c.8.800 1.400 1.900 1.700 3l-2.800 3.800-3.200-.900z" fill="#3ccf3c"/>
<polygon points="13.4,109.6 17.5,111.6 19,114.8 16.3,116.8 12.6,113.6" fill="#f8da34"/>
<polygon points="18.6,115 21.7,120 16,120.8 15.4,117.6" fill="#f88e7c"/>
<path d="M14.6 114.4L9 119.6" stroke="#8db4dc" stroke-width="1.6" stroke-linecap="round"/>
<circle cx="8.8" cy="119.7" r="1.5" fill="#8db4dc"/>
<rect x="34.6" y="62.4" width="7.6" height="8" fill="#fff" stroke="#7da3cf" stroke-width="0.8"/>
<rect x="35.3" y="63.1" width="6.2" height="1.8" fill="#f6b26b"/>
<rect x="37.3" y="63.3" width="1.6" height="1.4" fill="#8fce7f"/>
<rect x="39.4" y="63.3" width="1.6" height="1.4" fill="#ffd966"/>
<path d="M37 65v5M35 67h6" stroke="#a9c4e2" stroke-width="0.5"/>
<rect x="40.2" y="66.6" width="3.9" height="5" rx="0.6" fill="#4f8fd6"/>
<rect x="41" y="67.2" width="2.3" height="1.5" fill="#fff"/>
<rect x="41" y="69.7" width="2.3" height="1.3" fill="#dfeaf7"/>
<rect x="89.4" y="62.4" width="6.6" height="9" fill="#6cc04a"/>
<rect x="93.5" y="62.6" width="5.4" height="6.2" fill="#5a8fd0"/>
<path d="M90.5 64.5l1.6 1.6M90.8 69l1.4-1.5M94.2 70.3l-1-1.4" stroke="#a6e08c" stroke-width="0.6"/>
<path d="M91.8 65.4h3v-1.200l2.800 1.900-2.800 1.900v-1.200h-3z" fill="#ffc93a" stroke="#e8a62e" stroke-width="0.3"/>
<circle cx="147.7" cy="66.5" r="3.7" fill="#fdfdfd" stroke="#6aa5e6" stroke-width="1" stroke-dasharray="7.5 1.2 1 1.2 1 1.2 1 1.2 7 1"/>
<path d="M146.9 64.7c1.600.4 1.600 2.800 0 3.400" fill="none" stroke="#ef6c3a" stroke-width="1"/>
<rect x="614.4" y="62.6" width="9" height="8.8" fill="#fff" stroke="#8aa8c8" stroke-width="0.6"/>
<rect x="614.4" y="62.4" width="9" height="2.6" fill="#2e5fa0"/>
<path d="M616 68h5.8M616 69.6h5.8" stroke="#444" stroke-width="0.9" stroke-dasharray="1.2 0.6"/>
<circle cx="734.4" cy="67.2" r="3.1" fill="none" stroke="#7fb2e8" stroke-width="2.2" stroke-dasharray="1.7 0.73"/>
<circle cx="734.4" cy="67.2" r="2.6" fill="none" stroke="#7fb2e8" stroke-width="1.6"/></svg>
<span class="t" style="left:33.00px;top:10.00px;font-size:11.5px;color:#262626;font-weight:700;letter-spacing:-0.092px;">h-00000.emcosoftware.com</span>
<span class="t" style="left:32.70px;top:33.00px;font-size:8.2px;color:#444;letter-spacing:-0.156px;">Africa\South Africa</span>
<span class="t" style="left:32.70px;top:45.00px;font-size:7.5px;color:#444;letter-spacing:-0.377px;">Country Code: ZA</span>
<span class="t" style="left:571.39px;top:11.00px;font-size:9.3px;color:#3a3a3a;">Statistics</span>
<span class="t" style="left:625.11px;top:11.00px;font-size:9.3px;color:#3a3a3a;">Alerts</span>
<span class="t" style="left:665.64px;top:11.00px;font-size:9.3px;color:#3a3a3a;">State</span>
<span class="t" style="left:704.53px;top:11.00px;font-size:9.3px;color:#3a3a3a;">Quality</span>
<span class="t" style="left:46.50px;top:64.00px;font-size:6.95px;color:#2e2e2e;letter-spacing:-0.058px;">Report As</span>
<span class="t" style="left:101.30px;top:64.00px;font-size:6.95px;color:#2e2e2e;letter-spacing:-0.098px;">Export</span>
<span class="t" style="left:626.30px;top:64.00px;font-size:6.95px;color:#2e2e2e;letter-spacing:-0.154px;">Period: Yesterday (9/30/2022)</span>
<span class="t" style="left:37.90px;top:87.00px;font-size:9.6px;color:#505050;letter-spacing:-0.142px;">Performance</span>
<span class="t" style="left:150.00px;top:87.00px;font-size:9.6px;color:#fff;font-weight:700;letter-spacing:-0.400px;">Low</span>
<span class="t" style="left:38.00px;top:109.00px;font-size:6.59px;color:#484848;letter-spacing:0.214px;">Uptime:</span>
<span class="t" style="left:65.70px;top:109.00px;font-size:6.59px;color:#484848;letter-spacing:-0.142px;">99.54%</span>
<span class="t" style="left:38.00px;top:121.00px;font-size:6.59px;color:#484848;letter-spacing:-0.089px;">Latency:</span>
<span class="t" style="left:66.20px;top:121.00px;font-size:6.59px;color:#f56c6c;font-weight:700;letter-spacing:-0.057px;">215.29 ms</span>
<span class="t" style="left:38.00px;top:132.00px;font-size:6.59px;color:#484848;letter-spacing:-0.111px;">MOS:</span>
<span class="t" style="left:58.40px;top:132.00px;font-size:6.59px;color:#ffa629;font-weight:700;letter-spacing:-0.032px;">3.54</span>
<span class="t" style="left:116.00px;top:109.00px;font-size:6.59px;color:#484848;letter-spacing:-0.119px;">Packet Loss:</span>
<span class="t" style="left:155.80px;top:109.00px;font-size:6.59px;color:#484848;letter-spacing:-0.098px;">2.47%</span>
<span class="t" style="left:116.00px;top:121.00px;font-size:6.59px;color:#484848;letter-spacing:-0.382px;">CV:</span>
<span class="t" style="left:129.70px;top:121.00px;font-size:6.59px;color:#ffa629;font-weight:700;letter-spacing:-0.142px;">17.69%</span>
<span class="t" style="left:34.50px;top:154.00px;font-size:6.59px;color:#444;letter-spacing:-0.136px;">MOS:</span>
<span class="t" style="left:32.60px;top:172.00px;font-size:9.6px;color:#444;">Availability</span>
<span class="t" style="left:33.00px;top:293.00px;font-size:9.6px;color:#444;letter-spacing:-0.347px;">Latency</span>
<span class="t" style="left:32.60px;top:387.00px;font-size:9.6px;color:#444;letter-spacing:-0.011px;">Quality</span>
<span class="t" style="left:57.65px;top:198.00px;font-size:7.9px;color:#74c365;letter-spacing:0.069px;">Uptime:</span>
<span class="t" style="left:58.55px;top:211.00px;font-size:7.9px;color:#74c365;font-weight:700;letter-spacing:-0.150px;">99.54%</span>
<span class="t" style="left:134.95px;top:198.00px;font-size:7.9px;color:#f56c6c;letter-spacing:-0.261px;">Packet Loss:</span>
<span class="t" style="left:145.35px;top:211.00px;font-size:7.9px;color:#f56c6c;font-weight:700;letter-spacing:-0.221px;">2.47%</span>
<span class="t" style="left:32.90px;top:228.00px;font-size:6.65px;color:#444;letter-spacing:-0.050px;">Up:</span>
<span class="t" style="left:85.40px;top:228.00px;font-size:6.65px;color:#333;font-weight:700;letter-spacing:-0.153px;">23:52:02</span>
<span class="t" style="left:32.90px;top:240.00px;font-size:6.65px;color:#444;letter-spacing:0.189px;">Down:</span>
<span class="t" style="left:85.40px;top:240.00px;font-size:6.65px;color:#333;font-weight:700;letter-spacing:-0.153px;">00:06:39</span>
<span class="t" style="left:117.20px;top:228.00px;font-size:6.65px;color:#444;letter-spacing:-0.183px;">Lost:</span>
<span class="t" style="left:184.00px;top:228.00px;font-size:6.65px;color:#333;font-weight:700;letter-spacing:-0.066px;">217</span>
<span class="t" style="left:117.20px;top:240.00px;font-size:6.65px;color:#444;letter-spacing:0.006px;">Delivered:</span>
<span class="t" style="left:180.70px;top:240.00px;font-size:6.65px;color:#333;font-weight:700;letter-spacing:-0.149px;">8535</span>
<span class="t" style="left:56.15px;top:258.00px;font-size:7.9px;color:#f56c6c;letter-spacing:-0.170px;">Outages:</span>
<span class="t" style="left:67.55px;top:271.00px;font-size:7.9px;color:#f56c6c;font-weight:700;letter-spacing:-0.444px;">19</span>
<span class="t" style="left:117.20px;top:259.00px;font-size:6.65px;color:#444;letter-spacing:0.009px;">Shortest:</span>
<span class="t" style="left:170.00px;top:259.00px;font-size:6.65px;color:#333;font-weight:700;letter-spacing:-0.215px;">00:00:08</span>
<span class="t" style="left:117.20px;top:271.00px;font-size:6.65px;color:#444;letter-spacing:0.011px;">Longest:</span>
<span class="t" style="left:170.00px;top:271.00px;font-size:6.65px;color:#333;font-weight:700;letter-spacing:-0.215px;">00:01:39</span>
<span class="t" style="left:54.50px;top:313.00px;font-size:7.9px;color:#ffc933;letter-spacing:-0.113px;">Deviation:</span>
<span class="t" style="left:55.40px;top:326.00px;font-size:7.9px;color:#ffc933;font-weight:700;letter-spacing:-0.148px;">38.08 ms</span>
<span class="t" style="left:145.40px;top:313.00px;font-size:7.9px;color:#ffc933;letter-spacing:-0.494px;">CV:</span>
<span class="t" style="left:143.45px;top:326.00px;font-size:7.9px;color:#ffc933;font-weight:700;letter-spacing:-0.283px;">17.69%</span>
<span class="t" style="left:56.25px;top:352.00px;font-size:7.9px;color:#ffa629;letter-spacing:-0.122px;">Average:</span>
<span class="t" style="left:53.10px;top:365.00px;font-size:7.9px;color:#ffa629;font-weight:700;letter-spacing:-0.109px;">215.29 ms</span>
<span class="t" style="left:117.20px;top:353.00px;font-size:6.65px;color:#444;letter-spacing:0.148px;">Minimum:</span>
<span class="t" style="left:164.40px;top:353.00px;font-size:6.65px;color:#333;font-weight:700;letter-spacing:-0.145px;">190.17 ms</span>
<span class="t" style="left:117.20px;top:364.00px;font-size:6.65px;color:#444;">Maximum:</span>
<span class="t" style="left:161.10px;top:364.00px;font-size:6.65px;color:#333;font-weight:700;letter-spacing:-0.170px;">1434.93 ms</span>
<span class="t" style="left:61.00px;top:407.00px;font-size:7.9px;color:#9a9a9a;letter-spacing:-0.104px;">Good:</span>
<span class="t" style="left:66.30px;top:420.00px;font-size:7.9px;color:#9a9a9a;font-weight:700;letter-spacing:-0.509px;">0%</span>
<span class="t" style="left:140.50px;top:407.00px;font-size:7.9px;color:#9a9a9a;letter-spacing:-0.040px;">Warning:</span>
<span class="t" style="left:150.80px;top:420.00px;font-size:7.9px;color:#9a9a9a;font-weight:700;letter-spacing:-0.509px;">0%</span>
<span class="t" style="left:203.90px;top:85.00px;font-size:9.6px;color:#444;letter-spacing:-0.048px;">Latency &amp; Uptime</span>
<span class="t" style="left:203.70px;top:340.00px;font-size:9.6px;color:#444;letter-spacing:-0.116px;">State &amp; Quality</span>
</body></html>
